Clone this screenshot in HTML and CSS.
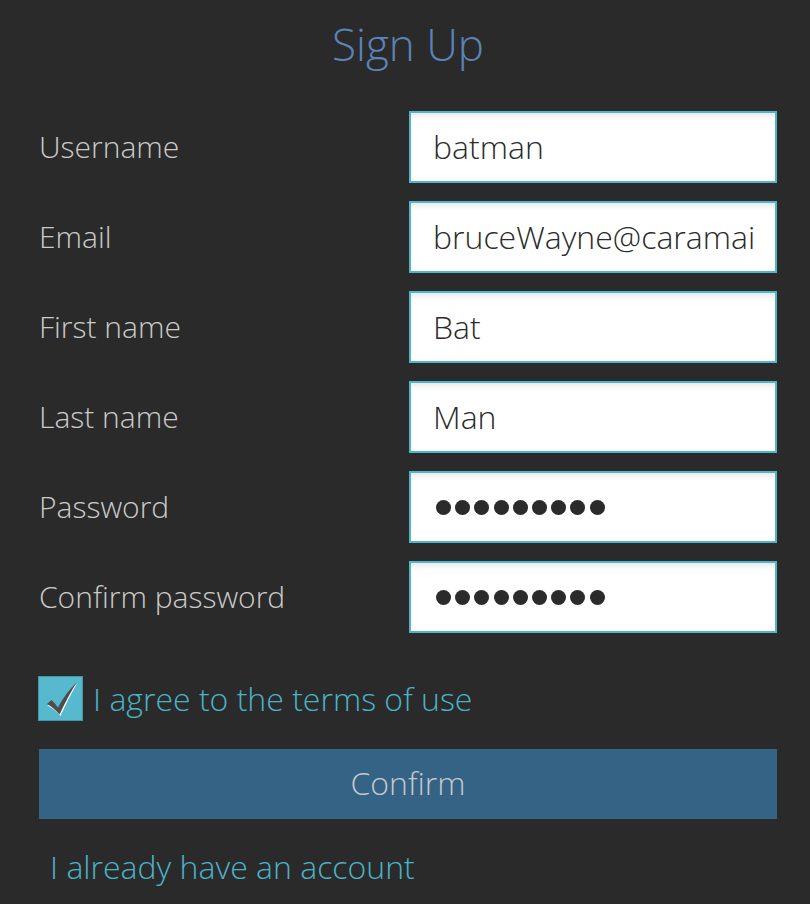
FILE: index.html
```html
<!DOCTYPE html>
<html lang="en">
<head>
<meta charset="utf-8">
<title>Sign Up</title>
<link rel="stylesheet" href="styles.css">
</head>
<body>
<main class="page">
  <h1 class="title">Sign Up</h1>
  <div class="form">
    <div class="row"><span class="label">Username</span><div class="field"><span class="value">batman</span></div></div>
    <div class="row"><span class="label">Email</span><div class="field"><span class="value">bruceWayne@caramail.com</span></div></div>
    <div class="row"><span class="label">First name</span><div class="field"><span class="value">Bat</span></div></div>
    <div class="row"><span class="label">Last name</span><div class="field"><span class="value">Man</span></div></div>
    <div class="row"><span class="label">Password</span><div class="field"><span class="dots"><i></i><i></i><i></i><i></i><i></i><i></i><i></i><i></i><i></i></span></div></div>
    <div class="row"><span class="label">Confirm password</span><div class="field"><span class="dots"><i></i><i></i><i></i><i></i><i></i><i></i><i></i><i></i><i></i></span></div></div>
  </div>
  <label class="agree">
    <span class="box">
      <svg width="45" height="45" viewBox="0 0 45 45">
        <path d="M9.5 29.5 L14 25.5 Q17.5 28.5 20.5 33 Q28 18 39 7.5 Q30.5 22 22.5 40 Q16.5 33 9.5 29.5 Z" fill="#ffffff"/>
        <path d="M9 28 L13.5 24 Q17 27 20 31.5 Q27.5 17 38.5 6.5 Q30 20.5 21.5 38.5 Q15.5 31.5 9 28 Z" fill="#4d4d4d"/>
      </svg>
    </span>
    <span class="agree-text">I agree to the terms of use</span>
  </label>
  <button class="confirm" type="button">Confirm</button>
  <a class="link" href="#">I already have an account</a>
</main>
</body>
</html>
```
FILE: styles.css
```css
* { box-sizing: border-box; }
html, body {
  margin: 0;
  padding: 0;
  background: #2a2a2a;
}
body {
  font-family: "Open Sans", "Liberation Sans", sans-serif;
  font-weight: 300;
}
.page {
  width: 810px;
  height: 904px;
  padding: 0 33px 0 39px;
  display: flex;
  flex-direction: column;
}
.title {
  margin: 0;
  height: 111px;
  padding-top: 14px;
  text-align: center;
  font-size: 44px;
  line-height: 60px;
  font-weight: 300;
  color: #5a84b7;
}
.form {
  display: flex;
  flex-direction: column;
  gap: 18px;
}
.row {
  display: flex;
  align-items: center;
  justify-content: space-between;
  height: 72px;
}
.label {
  font-size: 30px;
  color: #cbcbcb;
  padding-bottom: 2px;
}
.field {
  width: 368px;
  height: 72px;
  border: 2px solid #4fb6c9;
  background: #ffffff;
  box-shadow: inset 0 7px 7px -5px rgba(0, 0, 0, 0.12);
  padding: 0 19px 0 22px;
  display: flex;
  align-items: center;
}
.value {
  display: block;
  width: 100%;
  overflow: hidden;
  white-space: nowrap;
  font-size: 32px;
  font-weight: 300;
  color: #2b2b2b;
  line-height: 44px;
  padding-bottom: 1px;
}
.dots {
  display: flex;
  gap: 4.2px;
  padding-left: 3px;
}
.dots i {
  display: block;
  width: 15px;
  height: 15px;
  border-radius: 50%;
  background: #2b2b2b;
}
.agree {
  display: flex;
  align-items: center;
  gap: 10px;
  margin-top: 43px;
  height: 45px;
}
.box {
  width: 45px;
  height: 45px;
  background: #57b9cd;
  border: 1px solid #4596a8;
  display: block;
  margin-left: -1px;
  position: relative;
}
.box svg {
  position: absolute;
  left: -1px;
  top: -1px;
}
.agree-text {
  font-size: 32px;
  color: #4bb3c7;
  line-height: 45px;
}
.confirm {
  margin-top: 28px;
  width: 738px;
  height: 70px;
  border: none;
  background: #346385;
  color: #c3c9cd;
  font-family: inherit;
  font-weight: 300;
  font-size: 32px;
  padding: 0 0 3px;
}
.link {
  margin-top: 26px;
  margin-left: 11px;
  font-size: 32px;
  color: #4bb3c7;
  text-decoration: none;
  line-height: 44px;
}
```
